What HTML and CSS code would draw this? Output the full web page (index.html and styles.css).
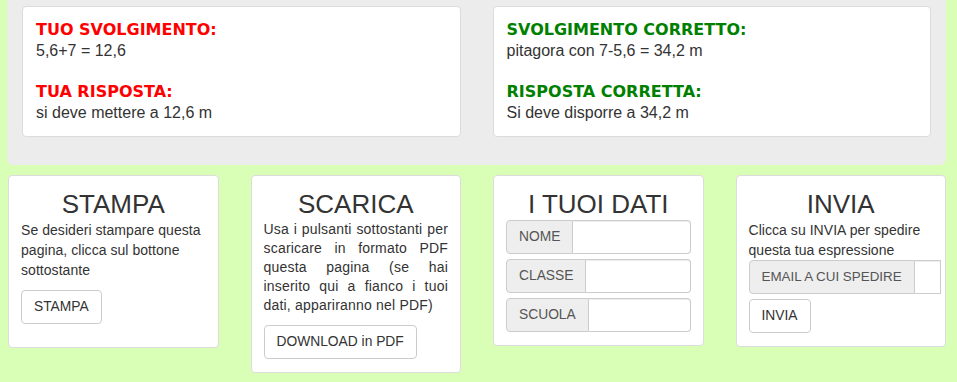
FILE: index.html
```html
<!DOCTYPE html>
<html lang="it">
<head>
<meta charset="utf-8">
<title>Risultato</title>
<link rel="stylesheet" href="styles.css">
</head>
<body>
<div class="page">
  <section class="results">
    <div class="result">
      <div class="label wrong">TUO SVOLGIMENTO:</div>
      <div class="value">5,6+7 = 12,6</div>
      <div class="spacer"></div>
      <div class="label wrong">TUA RISPOSTA:</div>
      <div class="value">si deve mettere a 12,6 m</div>
    </div>
    <div class="result">
      <div class="label right">SVOLGIMENTO CORRETTO:</div>
      <div class="value">pitagora con 7-5,6 = 34,2 m</div>
      <div class="spacer"></div>
      <div class="label right">RISPOSTA CORRETTA:</div>
      <div class="value">Si deve disporre a 34,2 m</div>
    </div>
  </section>

  <section class="tools">
    <div class="tool tool-print">
      <h3 class="tool-title">STAMPA</h3>
      <p class="tool-text">Se desideri stampare questa pagina, clicca sul bottone sottostante</p>
      <button class="btn btn-print">STAMPA</button>
    </div>
    <div class="tool">
      <h3 class="tool-title">SCARICA</h3>
      <p class="tool-text justified">Usa i pulsanti sottostanti per scaricare in formato PDF questa pagina (se hai inserito qui a fianco i tuoi dati, appariranno nel PDF)</p>
      <button class="btn">DOWNLOAD in PDF</button>
    </div>
    <div class="tool">
      <h3 class="tool-title">I TUOI DATI</h3>
      <div class="input-group">
        <span class="addon">NOME</span>
        <input class="field" type="text">
      </div>
      <div class="input-group">
        <span class="addon">CLASSE</span>
        <input class="field" type="text">
      </div>
      <div class="input-group">
        <span class="addon">SCUOLA</span>
        <input class="field" type="text">
      </div>
    </div>
    <div class="tool">
      <h3 class="tool-title">INVIA</h3>
      <p class="tool-text tight">Clicca su INVIA per spedire questa tua espressione</p>
      <div class="input-group email">
        <span class="addon">EMAIL A CUI SPEDIRE</span>
        <input class="field narrow" type="text">
      </div>
      <button class="btn btn-send">INVIA</button>
    </div>
  </section>
</div>
</body>
</html>
```

FILE: styles.css
```css
* { box-sizing: border-box; }

html, body {
  margin: 0;
  padding: 0;
  background: #d9ffb7;
}

body {
  font-family: "Liberation Sans", Arial, sans-serif;
  font-size: 14px;
  line-height: 20px;
  color: #333;
}

.page {
  width: 939px;
  margin-left: 7px;
}

/* top results panel */
.results {
  background: #ececec;
  border-radius: 0 0 6px 6px;
  padding: 6px 15px 28px 15px;
  display: grid;
  grid-template-columns: minmax(0, 1fr) minmax(0, 1fr);
  column-gap: 32px;
  align-items: start;
}

.result {
  background: #fff;
  border: 1px solid #dcdcdc;
  border-radius: 4px;
  padding: 13px 13px 12px 13px;
  font-size: 16px;
  line-height: 20.8px;
}

.label {
  font-family: "DejaVu Sans", Verdana, sans-serif;
  font-weight: bold;
  font-size: 16px;
}

.label.wrong { color: #ff0000; }
.label.right { color: #008000; }

.spacer { height: 20.8px; }

/* bottom tools row */
.tools {
  margin-top: 10px;
  padding-left: 1px;
  display: grid;
  grid-template-columns: repeat(4, minmax(0, 1fr));
  column-gap: 32px;
  align-items: start;
}

.tool {
  background: #fff;
  border: 1px solid #dcdcdc;
  border-radius: 4px;
  padding: 13px 12px;
  min-width: 0;
}

.tool-title {
  margin: 0;
  font-size: 26px;
  line-height: 31px;
  font-weight: normal;
  text-align: center;
  color: #333;
}

.tool-text {
  margin: 0 0 10px 0;
  letter-spacing: 0.05px;
}

.tool-text.justified {
  text-align: justify;
  line-height: 19px;
  letter-spacing: 0.2px;
}

.tool-text.tight {
  margin-bottom: 0;
}

.btn {
  display: inline-block;
  font-family: "Liberation Sans", Arial, sans-serif;
  font-size: 13.8px;
  line-height: 20px;
  padding: 6px 12px;
  color: #333;
  background: #fff;
  border: 1px solid #ccc;
  border-radius: 4px;
}

.btn-print { margin-bottom: 10px; }
.btn-send { margin-top: 5px; }

.input-group {
  display: flex;
  height: 34px;
  margin-bottom: 5px;
}

.input-group:last-child { margin-bottom: 0; }

.addon {
  flex: none;
  padding: 6px 12px;
  font-size: 13.8px;
  line-height: 20px;
  color: #555;
  background: #eee;
  border: 1px solid #ccc;
  border-radius: 4px 0 0 4px;
  white-space: nowrap;
}

.field {
  flex: 1 1 auto;
  min-width: 0;
  width: 100%;
  height: 34px;
  margin: 0;
  padding: 6px 12px;
  border: 1px solid #ccc;
  border-left: 0;
  border-radius: 0 4px 4px 0;
  background: #fff;
  box-shadow: inset 0 1px 1px rgba(0, 0, 0, 0.075);
  font-size: 14px;
}

.input-group.email {
  width: max-content;
  margin-bottom: 0;
}

.input-group.email .addon {
  font-size: 13.4px;
}

.field.narrow {
  flex: 0 0 26px;
  width: 26px;
  padding: 0;
  border-radius: 0;
}
```
